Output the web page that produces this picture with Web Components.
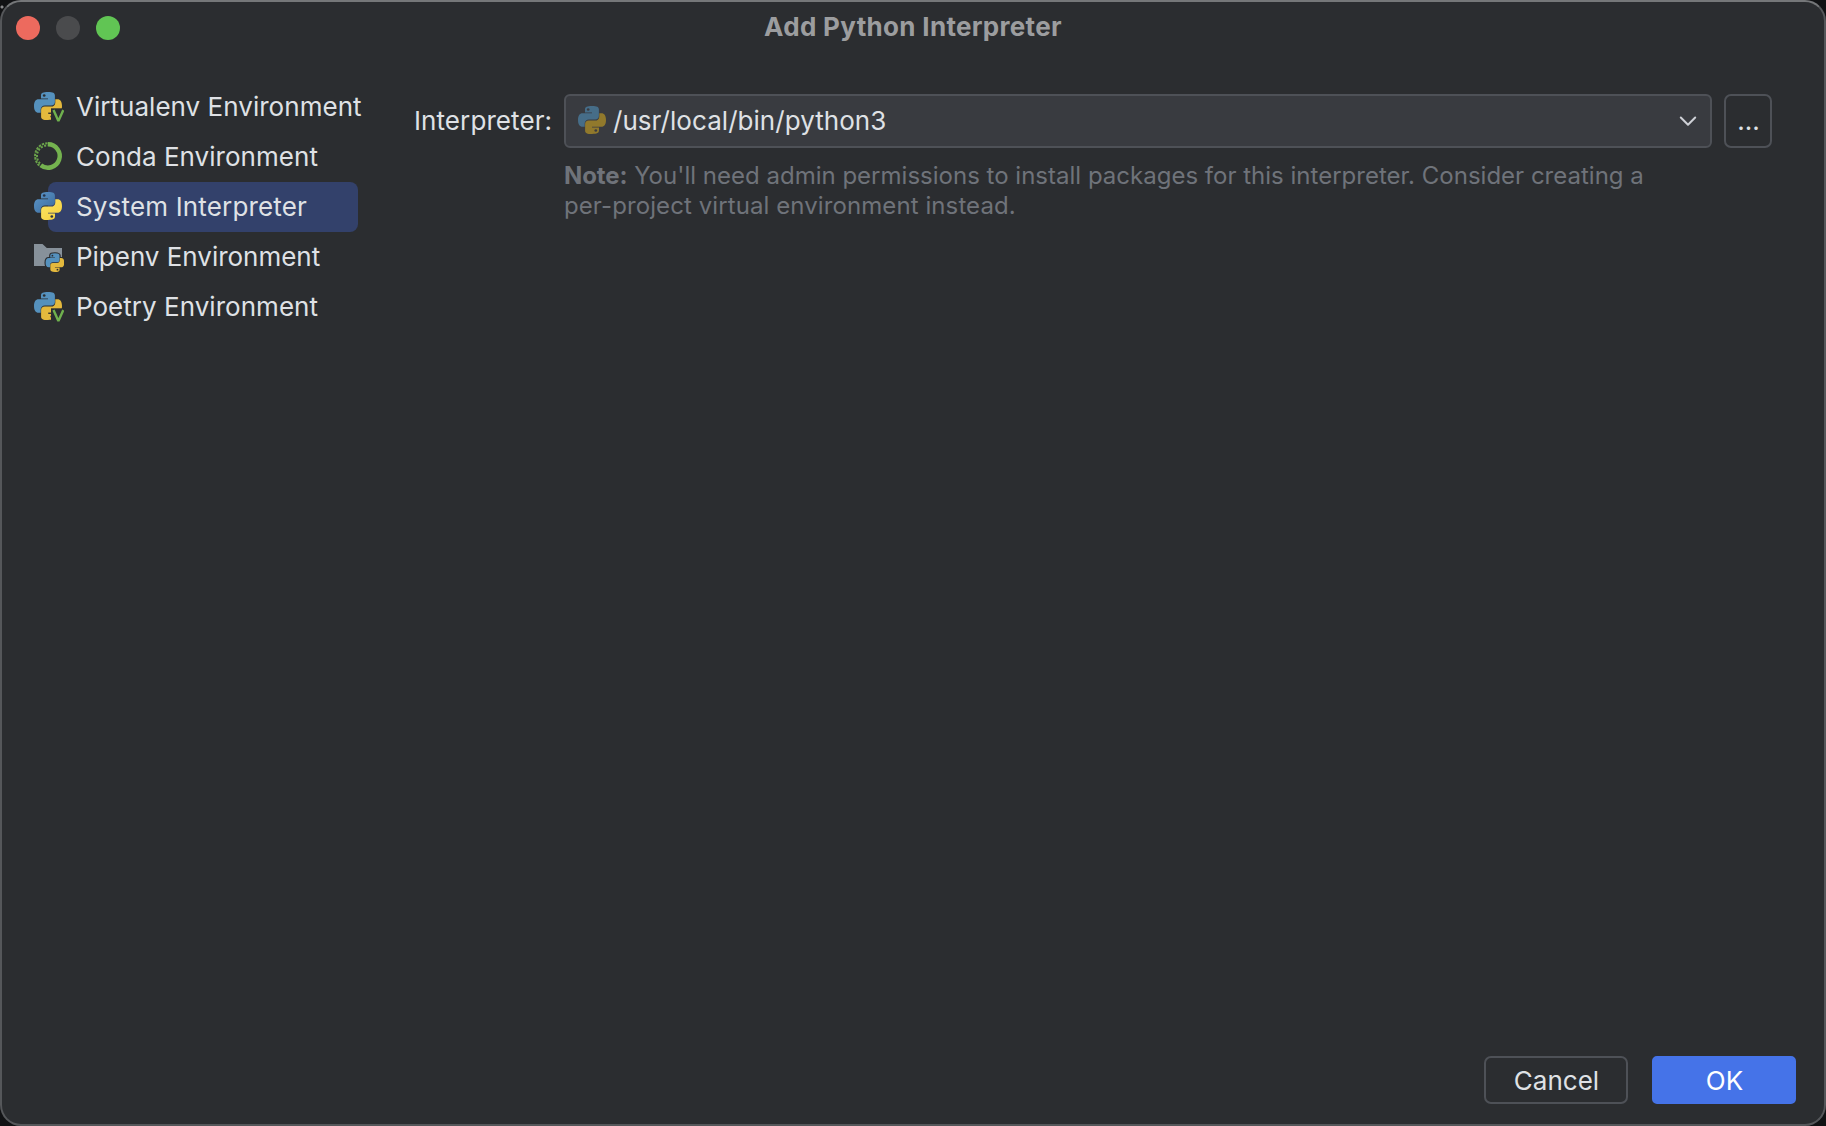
<!DOCTYPE html>
<html lang="en">
<head>
<meta charset="utf-8">
<title>Add Python Interpreter</title>
<style>
html,body{margin:0;height:100%;overflow:hidden}
html{background:radial-gradient(circle at 2px 7px,#8a8b8d 1px,transparent 2px) #111214}
body{font:26px/32px Inter,"Liberation Sans",sans-serif;color:#dfe1e5}
</style>
</head>
<body>
<dialog-window caption="Add Python Interpreter">
  <env-list slot="nav">
    <env-item icon="venv">Virtualenv Environment</env-item>
    <env-item icon="conda">Conda Environment</env-item>
    <env-item icon="python" selected>System Interpreter</env-item>
    <env-item icon="pipenv" style="letter-spacing:-.02px">Pipenv Environment</env-item>
    <env-item icon="venv">Poetry Environment</env-item>
  </env-list>
  <interpreter-form>
    <span slot="label">Interpreter:</span>
    <combo-box slot="field">/usr/local/bin/python3</combo-box>
    <push-button slot="browse" kind="browse">...</push-button>
    <note-text slot="note"><b>Note:</b> You'll need admin permissions to install packages for this interpreter. Consider creating a<br><span style="letter-spacing:.09px">per-project virtual environment instead.</span></note-text>
  </interpreter-form>
  <push-button slot="actions">Cancel</push-button>
  <push-button slot="actions" kind="primary">OK</push-button>
</dialog-window>
<script>
const define = (name, html) => customElements.define(name, class extends HTMLElement {
  connectedCallback() {
    if (this.shadowRoot) return;
    this.attachShadow({ mode: 'open' }).innerHTML = typeof html === 'function' ? html(this) : html;
  }
});

const HALF = 'M7 6.4V3.4C7 1 9 0 14 0S20.9 1 20.9 3.6V10C20.9 12.2 19.5 13.4 17.2 13.4H11C8.4 13.4 6.7 15.2 6.7 17.6V20.8H4.6C1.6 20.8 0 18.4 0 14S1.6 7.2 4.6 7.2H14V6.4Z';
const snake = (blue, yellow, eye) => `<path d="${HALF}" fill="${blue}"/><circle cx="10.2" cy="3.5" r="1.35" fill="${eye}"/>
  <g transform="rotate(180 14 14)"><path d="${HALF}" fill="${yellow}"/><circle cx="10.2" cy="3.5" r="1.35" fill="${eye}"/></g>`;
const ICONS = {
  python: `<defs><linearGradient id="b" x1="0" y1="0" x2="1" y2="1"><stop stop-color="#5c97ca"/><stop offset="1" stop-color="#3b6a9b"/></linearGradient>
    <linearGradient id="y" x1="0" y1="0" x2="1" y2="1"><stop stop-color="#f5d03c"/><stop offset="1" stop-color="#fbe466"/></linearGradient></defs>
    <g transform="translate(2 2)">${snake('url(#b)', 'url(#y)', '#26344a')}</g>`,
  muted: `<g transform="translate(2 2)">${snake('#466d88', '#91792c', '#3a3b40')}</g>`,
  venv: `<g transform="translate(2 2)">${snake('#5591bd', '#e4b93d', '#2b2d30')}</g>
    <path d="M19 18.3H32V32H19Z" fill="#2b2d30"/><path d="M16.5 23.3H19" stroke="#2b2d30" stroke-width="1"/>
    <path d="M21.5 20.1L26.4 31L31.3 20.1" fill="none" stroke="#6fb04e" stroke-width="2.4" stroke-linejoin="bevel"/>`,
  conda: `<path d="M16 4.3A11.7 11.7 0 1 1 8.8 25.2" fill="none" stroke="#74b24f" stroke-width="4.5"/>
    <path d="M15.6 3.2A12.8 12.8 0 0 0 7.4 25.6" fill="none" stroke="#69a04a" stroke-width="2" stroke-dasharray="2.4 1.1"/>
    <path d="M16 5.4A10.6 10.6 0 0 0 8.4 23.8" fill="none" stroke="#69a04a" stroke-width="2" stroke-dasharray="2 1.5" stroke-dashoffset="1.6"/>`,
  pipenv: `<path d="M2 4H10.5L14.8 8H30V26H2Z" fill="#87919a"/>
    <g transform="translate(13.6 13.3) scale(.667)"><g fill="#2b2d30" stroke="#2b2d30" stroke-width="3.4" stroke-linejoin="round">
    <path d="${HALF}"/><path d="${HALF}" transform="rotate(180 14 14)"/></g>${snake('#5591bd', '#e4b93d', '#2b2d30')}</g>`
};

define('app-icon', el => `<style>:host{display:block;flex:none;width:32px;height:32px}svg{display:block}</style>
  <svg width="32" height="32" viewBox="0 0 32 32">${ICONS[el.getAttribute('name')]}</svg>`);

define('env-item', el => `<style>
  :host{display:grid;grid-template-columns:16px 310px;height:50px;padding-left:32px;letter-spacing:.03px;white-space:nowrap}
  .highlight{grid-area:1/2;border-radius:8px}
  :host([selected]){letter-spacing:.16px}
  :host([selected]) .highlight{background:#33416b}
  .content{grid-area:1/1/2/3;display:flex;align-items:center;gap:12px;height:50px}
  app-icon{margin-top:-2px}
  </style><div class="highlight"></div><div class="content"><app-icon name="${el.getAttribute('icon')}"></app-icon><span><slot></slot></span></div>`);

define('env-list', `<style>:host{display:flex;flex-direction:column}</style><slot></slot>`);

define('combo-box', `<style>
  :host{display:flex;align-items:center;box-sizing:border-box;width:1148px;height:54px;padding:0 13px 0 10px;
    border:2px solid #4e5157;border-radius:6px;background:#393b40;letter-spacing:.05px}
  app-icon{margin:-2px 5px 0 0}
  span{flex:1;margin-top:-1px}
  svg{display:block}</style>
  <app-icon name="muted"></app-icon><span><slot></slot></span>
  <svg width="18" height="12" viewBox="0 0 18 12"><path d="M1.8 2.5L9 9.7L16.2 2.5" fill="none" stroke="#ced0d6" stroke-width="2" stroke-linecap="round" stroke-linejoin="round"/></svg>`);

define('push-button', `<style>
  :host{display:flex;align-items:center;justify-content:center;box-sizing:border-box;width:144px;height:48px;
    border:2px solid #4e5157;border-radius:7px;padding:2px 0 0 1px}
  :host([kind=primary]){background:#4573e8;border-color:#4573e8;border-radius:5px;color:#fff}
  :host([kind=browse]){width:48px;height:54px;padding-top:0}
  </style><span><slot></slot></span>`);

define('note-text', `<style>:host{display:block;font-size:24px;line-height:30px;letter-spacing:.007px;color:#6f737a;white-space:nowrap}
  ::slotted(b){letter-spacing:-.1px}</style><slot></slot>`);

define('interpreter-form', `<style>
  :host{display:grid;grid-template-columns:140px 1148px 48px;column-gap:12px;row-gap:13px;align-items:center;align-content:start}
  .label{justify-self:start;padding-left:2px;letter-spacing:.09px;white-space:nowrap}
  .note{grid-column:2/4}
  </style><div class="label"><slot name="label"></slot></div><slot name="field"></slot><slot name="browse"></slot>
  <div class="note"><slot name="note"></slot></div>`);

define('dialog-window', el => `<style>
  :host{display:flex;flex-direction:column;box-sizing:border-box;width:1826px;height:1126px;
    background:#2b2d30;border:2px solid #55575a;border-top-color:#757779;border-radius:21px}
  header{display:grid;grid-template-columns:1fr auto 1fr;height:52px;align-items:center}
  .lights{display:flex;gap:16px;padding-left:14px}
  .lights i{width:24px;height:24px;border-radius:50%;background:#ed6a5e}
  .lights i:nth-child(2){background:#4a4b4d}.lights i:nth-child(3){background:#61c554}
  h1{margin:-2px 0 0;font:700 26px/32px Inter,"Liberation Sans",sans-serif;letter-spacing:.31px;color:#9c9d9f}
  main{display:flex;flex:1;padding-top:28px}
  nav{width:410px;flex:none;margin-left:-2px}
  section{padding-top:12px;margin-left:2px}
  footer{display:flex;justify-content:flex-end;gap:24px;padding:0 28px 20px 0}
  </style><header><div class="lights"><i></i><i></i><i></i></div><h1>${el.getAttribute('caption')}</h1></header>
  <main><nav><slot name="nav"></slot></nav><section><slot></slot></section></main>
  <footer><slot name="actions"></slot></footer>`);
</script>
</body>
</html>
